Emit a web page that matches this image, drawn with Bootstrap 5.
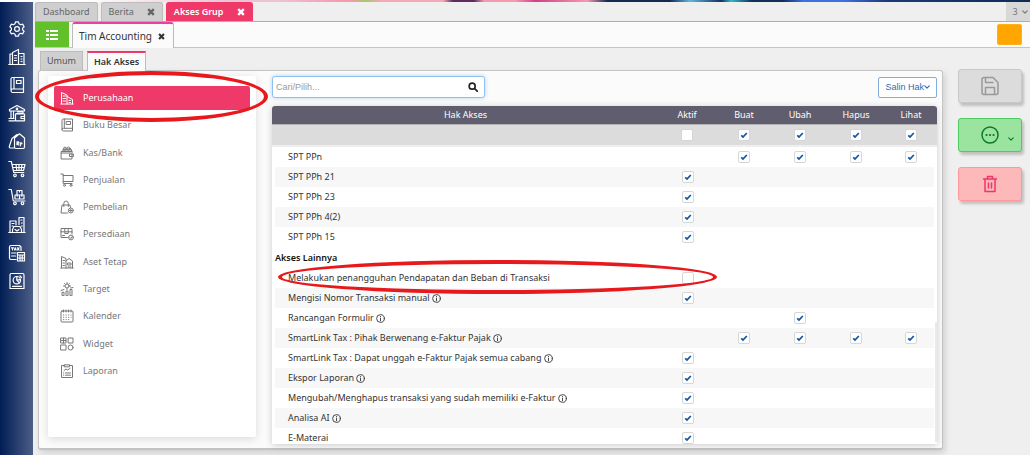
<!DOCTYPE html>
<html lang="id">
<head>
<meta charset="utf-8">
<meta name="viewport" content="width=device-width, initial-scale=1">
<title>Akses Grup</title>
<link rel="stylesheet" href="https://cdn.jsdelivr.net/npm/bootstrap@5.3.0/dist/css/bootstrap.min.css">
<style>
  :root { --pink: #ef3969; --line: #c4c4c4; }
  body { font-family: "Noto Sans", "Open Sans", sans-serif; font-size: 9px; line-height: 14px; background: #efefef; color: #333; }
  a { color: inherit; text-decoration: none; }
  svg { display: block; fill: none; stroke: currentColor; stroke-width: 1.2; stroke-linecap: round; stroke-linejoin: round; }
  .top-strip { height: 2px; background: linear-gradient(90deg, #fff 0 8%, #eec3d3 22% 27%, #f49ab0 33% 34%, #a8c86a 35.500%, #f5a8b8 37% 43%, #5e2b62 44% 46%, #f49ab0 47% 50%, #d0408a 52%, #f49ab0 57%, #132b50 59% 65%, #63b6dd 67%, #17325f 70%, #35b9c4 71%, #12305a 73% 76%, #3f70e0 78% 82%, #1c3b77 86%, #0d2c55); }
  .rail { width: 33px; padding-top: 18px; background: linear-gradient(90deg, #001d54, #4c5e88); color: #fff; }
  .rail a { height: 28px; }
  .rail svg { width: 18px; height: 18px; }
  .workspace { padding-left: 2px; min-width: 0; }
  .fit { min-height: 0; }
  .tabs-main { height: 20px; gap: 3px; border-bottom: 1px solid #ea90ae; }
  .tab-page { height: 19px; padding: 0 7px; gap: 13px; background: #cfcfcf; border: 1px solid #bcbcbc; border-bottom: 0; border-radius: 3px 3px 0 0; color: #666; }
  .tab-page.on { background: var(--pink); border-color: var(--pink); color: #fff; font-weight: 600; }
  .close-x { border: 0; padding: 0; background: none; color: inherit; }
  .close-x svg { width: 8px; height: 8px; stroke-width: 3; stroke-linecap: butt; }
  .tab-count { width: 24px; background: #d8d8d8; color: #777; }
  .chev { width: 6px; height: 6px; stroke-width: 1.5; }
  .tabs-doc { height: 26px; background: #fbfbfb; border-bottom: 1px solid var(--line); }
  .list-btn { width: 34px; height: 25px; border: 0; padding: 0; background: #62c12a; color: #fff; }
  .list-btn svg { width: 12px; height: 12px; stroke-width: 2; stroke-linecap: butt; }
  .tab-doc { height: 26px; margin-left: 3px; padding: 0 8px 0 6px; gap: 6px; background: #fbfbfb; border: 1px solid #bbb; border-top: 2px solid #ee3fa0; border-bottom: 0; border-radius: 3px 3px 0 0; font-size: 10px; }
  .tab-doc svg { width: 7px; height: 7px; }
  .flag-btn { width: 25px; height: 21px; margin-top: 2px; border: 1px solid #ffb01c; border-radius: 2px; padding: 0; background: #ffa600; }
  .content-col { padding: 3px 0 5px 3px; min-width: 0; }
  .tabs-sub { padding-left: 2px; gap: 4px; }
  .tab-sub { height: 19px; padding: 0 6px; background: #cfcfcf; border: 1px solid #bcbcbc; border-bottom: 0; color: #555; }
  .tab-sub.on { position: relative; z-index: 1; margin-bottom: -1px; height: 20px; background: #fbfbfb; border-top: 2px solid var(--pink); color: #333; font-weight: 600; }
  .panel { background: #fbfbfb; border: 1px solid var(--line); border-bottom-width: 2px; border-radius: 3px; box-shadow: 2px 3px 6px #0002; padding: 5px 5px 4px 9px; gap: 16px; min-height: 0; }
  .menu { width: 208px; margin-bottom: 7px; padding: 10px 6px; background: #fff; border-radius: 2px; box-shadow: 0 2px 9px #0002; }
  .menu ul { height: 297px; }
  .menu a { position: relative; height: 24px; padding-left: 6px; gap: 9px; color: #777; }
  .menu svg { width: 14px; height: 14px; stroke-width: 1; }
  .menu a.on { background: var(--pink); color: #fff; border-radius: 2px; }
  .ring { position: absolute; z-index: 5; border: 4px solid #e8191c; border-radius: 50%; pointer-events: none; }
  .ring-menu { left: -19px; right: -18px; top: -15px; bottom: -12px; }
  .ring-row { left: 3px; right: -58px; top: -8px; bottom: -6px; }
  .search { width: 213px; height: 22px; padding-right: 6px; border: 1px solid #8fc1f0; border-radius: 3px; background: #fff; box-shadow: 0 0 4px #8fc1f0aa; }
  .search input { border: 0; outline: 0; padding: 0 3px; background: none; font: 9px "Liberation Sans", sans-serif; color: #333; }
  .search input::placeholder { color: #999; }
  .search button { border: 0; padding: 0; background: none; color: #222; }
  .search button svg { width: 10px; height: 10px; stroke-width: 2; }
  .copy-btn { height: 21px; padding: 0 6px; border: 1px solid #83acd9; border-radius: 2px; background: #fff; color: #2f6cb3; font: 9px "Liberation Sans", sans-serif; }
  .grid-box { position: relative; margin-top: 8px; background: #fff; border-radius: 3px 3px 0 0; box-shadow: 0 1px 7px #0003; min-height: 0; }
  .grid-box::after { content: ""; position: absolute; right: 0; bottom: 2px; width: 2px; height: 120px; background: #e9e9e9; }
  .rights { width: 100%; table-layout: fixed; border-collapse: separate; border-spacing: 0; line-height: 14px; }
  .rights .c { width: 56px; }
  .rights .c-end { width: 54px; }
  .rights th, .rights td { padding: 0; text-align: center; vertical-align: middle; }
  .rights thead th { height: 18px; background: #605e6e; color: #fff; font-weight: 400; }
  .rights thead td { height: 23px; background: #dcdcdc; border-top: 1px solid #b5b5b8; border-bottom: 2px solid #efefef; }
  .rights tbody td, .rights tbody th { height: 20px; }
  .rights tbody th { position: relative; border-left: 3px solid #fff; padding-left: 13px; text-align: left; font-weight: 400; color: #333; }
  .rights tbody td:last-child { border-right: 3px solid #fff; padding-left: 4px; }
  .rights tbody td:not(:last-child), .rights thead :nth-child(n+3) { padding-left: 2px; }
  .rights .alt > * { background: #f7f7f7; background-clip: padding-box; }
  .rights .group-row th { height: 21px; padding-left: 0; font-weight: 600; color: #111; }
  .rights th svg { display: inline-block; width: 9px; height: 9px; stroke-width: 1; vertical-align: -2px; }
  .rights input { appearance: none; display: block; width: 12px; height: 12px; margin: 0 auto; border: 1px solid #d6d6d6; border-radius: 2px; background: #fff center/8px 8px no-repeat; }
  .rights input:checked { background-image: url("data:image/svg+xml,%3Csvg xmlns='http://www.w3.org/2000/svg' viewBox='0 0 8 8'%3E%3Cpath d='M1.2 4.4 3 6 6.8 2' fill='none' stroke='%231558a8' stroke-width='1.8'/%3E%3C/svg%3E"); }
  .actions { width: 87px; padding: 21px 8px 0 15px; gap: 15px; }
  .act { height: 34px; padding: 0; border: 1px solid; border-radius: 3px; box-shadow: 2px 3px 3px #0003; }
  .act .glyph { width: 20px; height: 20px; stroke-width: 1.5; }
  .act-save { background: #dcdcdc; border-color: #c9c9c9; color: #999; }
  .act-more { position: relative; background: #9be49f; border-color: #4ccb60; color: #0b7a2b; }
  .act-more .chev { position: absolute; right: 7px; bottom: 9px; }
  .act-del { background: #fdb9b9; border-color: #f99; color: #f0356a; }
</style>
<script src="https://cdn.jsdelivr.net/npm/bootstrap@5.3.0/dist/js/bootstrap.bundle.min.js"></script>
</head>
<body class="vh-100 d-flex flex-column overflow-hidden">
<svg width="0" height="0" class="position-absolute">
  <symbol id="x" viewBox="0 0 10 10"><path d="M1.500 1.500l7 7M8.500 1.500l-7 7"/></symbol>
  <symbol id="down" viewBox="0 0 8 8"><path d="M1 2.500l3 3 3-3"/></symbol>
  <symbol id="info" viewBox="0 0 10 10"><circle cx="5" cy="5" r="4.300"/><path d="M5 4.500v3M5 2.600v.2"/></symbol>
  <symbol id="lens" viewBox="0 0 12 12"><circle cx="5" cy="5" r="3.600"/><path d="M8 8l3 3"/></symbol>
  <symbol id="gear" viewBox="0 0 18 18"><circle cx="9" cy="9" r="2.400"/><path d="M7.500 1.800h3l.5 2 1.600.9 2-.6 1.500 2.600-1.500 1.400v1.800l1.500 1.400-1.500 2.600-2-.6-1.600.9-.5 2h-3l-.5-2-1.600-.9-2 .6-1.500-2.600 1.500-1.400V8.100L1.900 6.700l1.500-2.600 2 .6L7 3.800z"/></symbol>
  <symbol id="city" viewBox="0 0 18 18"><path d="M.8 16.500h16.400M4.500 16V4.500L10.500 1.500V16M4.500 6H2v10M10.500 5.500h5.500V16M6.500 7.500h2M6.500 10h2M6.500 12.500h2M13 8.500h1M13 11h1M13 13.500h1"/></symbol>
  <symbol id="book" viewBox="0 0 18 18"><path d="M3 14.500V3q0-1.500 1.500-1.500H15.500V16.500H4.500Q3 16.300 3 14.500 3 13 4.500 13H15.500M6 1.500V13M8.500 4.500h4.500v3H8.500z"/></symbol>
  <symbol id="bank" viewBox="0 0 18 18"><path d="M1.500 7V5.500L9 1.500l7.500 4V7zM3 7v7.500M5.500 7v7.500M1 14.500h5M1 16.800h5.500M8 9.500h7v-1.500H9.500M7.500 10h9v6.800h-9zM16.500 12.500H13v2h3.500"/><circle cx="9" cy="4.800" r=".8"/></symbol>
  <symbol id="tags" viewBox="0 0 18 18"><path d="M6.500 6L11.500 1.800 16.500 6V15Q16.500 16.500 15 16.500H8Q6.500 16.500 6.500 15zM6.500 16H2Q1 15.500 1.300 14.500L4 6.500 9 2.500M9 12.800v-3h1.300q1 .8 0 1.500H9l1.500 1.500M12.300 13.800v-3q1.800-.3 1.500 1l-1.500.5"/></symbol>
  <symbol id="cart" viewBox="0 0 18 18"><path d="M.8 1.500h2.500l2.500 11h10M4 4.500h13l-1.500 6H5.400M4.700 7.500h11.500M8 4.500l.8 6M11 4.500v6M14 4.500l-.8 6"/><circle cx="7" cy="15.300" r="1.300"/><circle cx="14.500" cy="15.300" r="1.300"/></symbol>
  <symbol id="trolley" viewBox="0 0 18 18"><path d="M.8 1.500h2.500l2 11.500H17M7 7h4.500v4H7zM11.500 7H16v4h-4.500M9 2.500h5V7M9 2.500V7M11.500 2.500v1.500M9.200 7v1.200M13.800 7v1.200"/><circle cx="7" cy="15.300" r="1.300"/><circle cx="14.500" cy="15.300" r="1.300"/></symbol>
  <symbol id="asset" viewBox="0 0 18 18"><path d="M.8 16.500h16.400M2 16V5h6v4M4 7.500h2M4 10h1M11 8.500V1.500h5V16M13 4h1M13.500 7h.8M13.500 10h.8M4.500 16v-2.500l1.500-3h6l1.500 3V16M7 13.500l2 1.500 2-1.500"/></symbol>
  <symbol id="tax" viewBox="0 0 18 18"><path d="M8 15.500H3Q1.500 15.500 1.500 14V3Q1.500 1.500 3 1.500h8.500L13 3V6.500M3.500 3.800h2M4.500 3.800v2.200M6.500 6l.8-2.200L8.100 6M9.500 3.800l1.500 2.200M11 3.800L9.500 6M3.500 9H8M3.500 12H7.500M9.500 8.500h7v8.500h-7zM9.500 11h7M12 11v6M14.200 11v6M9.500 14h7"/></symbol>
  <symbol id="chart" viewBox="0 0 18 18"><path d="M3.500 1.500h11Q16 1.500 16 3V16.500H2V3Q2 1.500 3.500 1.500zM4.500 14.300h9"/><circle cx="8.800" cy="8.200" r="3.700"/><path d="M8.800 4.500V8.200l3.700-.5M8.800 8.200l2.500 2.600M12 4l1.500 1.500"/></symbol>
  <symbol id="building" viewBox="0 0 14 14"><path d="M.8 13h12.400M1.500 13V1.500L7 4v9M7 5.500l5.500 3V13M3 5h2.500M3 7.500h2.500M3 10h2.500M9 9.500h1.500M9 11.500h1.500"/></symbol>
  <symbol id="ledger" viewBox="0 0 14 14"><path d="M2 11.500V2.500Q2 1 3.500 1H12.500V13H3.500Q2 13 2 11.500 2 10.300 3.500 10.300H12.500M4.300 1v9.300M6.500 3.500h4v3h-4z"/></symbol>
  <symbol id="wallet" viewBox="0 0 14 14"><path d="M1.500 5.500h10.500V13H1.500zM13 8H9.500v2.500H13zM2.500 5.500l1-2.500h7.500l1 2.500"/><circle cx="5" cy="2.600" r="1.500"/><circle cx="8.500" cy="2.500" r="1.500"/><path d="M1.500 7h9M3 4h8"/></symbol>
  <symbol id="cart2" viewBox="0 0 14 14"><path d="M.8 1h2.400v9.500H12M3.200 2.500H13V8.500H3.200"/><circle cx="4.500" cy="12.300" r="1"/><circle cx="11" cy="12.300" r="1"/></symbol>
  <symbol id="bag" viewBox="0 0 14 14"><path d="M7.500 13H1L2 5h8l.5 2.500M3.800 6.500V3.500Q4 1 6 1t2.300 2.500v3M9.500 10.500h2.500M10.800 9.300v2.500"/><circle cx="10.800" cy="10.500" r="2.500"/></symbol>
  <symbol id="box" viewBox="0 0 14 14"><path d="M7.500 10.500H1V1.500H12V7M1 4.800H12M4.800 1.500v5h3.400v-5M2.500 8.500h2M9.800 10.500l1 1 1.500-2"/><circle cx="11" cy="10.500" r="2.400"/></symbol>
  <symbol id="fixed" viewBox="0 0 14 14"><path d="M.8 13h12.400M1.500 13V1.500L6 3.500V13M6 6l3-2.500 3.500 2.500v7M3 5.500h1.500M3 8h1.500M3 10.500h1.500M8 8h3v2H8zM8 12h3"/></symbol>
  <symbol id="target" viewBox="0 0 14 14"><circle cx="7" cy="4" r="2"/><path d="M7 .6v1M7 6.500v1M3.500 4h1M9.500 4h1M4.500 1.500l.7.700M9.500 1.500l-.7.700M2 13.300v-3h2v3zM6 13.300V9h2v4.300zM10 13.300V7.500h2v5.800zM1 8.500l3-1M13 5.500l-2.500.5"/></symbol>
  <symbol id="calendar" viewBox="0 0 14 14"><rect x="1" y="2" width="12" height="11" rx="1"/><path d="M3.500 1v2M6 1v2M8.500 1v2M11 1v2M3.500 6h.3M6 6h.3M8.500 6h.3M11 6h.1M3.500 8.300h.3M6 8.300h.3M8.500 8.300h.3M11 8.300h.1M3.500 10.600h.3M6 10.600h.3M8.500 10.600h.3"/></symbol>
  <symbol id="widget" viewBox="0 0 14 14"><path d="M1 1h5v5H1zM8.500 1h4.500v5H8.500zM1 8h5v5H1zM3.500 1v5M1 3.500h5"/><circle cx="10.600" cy="10.500" r="2.500"/></symbol>
  <symbol id="report" viewBox="0 0 14 14"><path d="M4.500 1.500h-3v12h11v-12h-3M4.500.8h5v2h-5zM4 6.500l2-1.500 1.500 1L10 4.500M3.500 9h.3M5.500 9h5M3.500 11.200h.3M5.500 11.200h5"/></symbol>
</svg>

<div class="top-strip flex-shrink-0"></div>
<div class="fit d-flex flex-grow-1">
  <nav class="rail flex-shrink-0 d-flex flex-column" aria-label="Modul">
    <a href="#" class="d-flex justify-content-center" aria-label="Pengaturan"><svg><use href="#gear"/></svg></a>
    <a href="#" class="d-flex justify-content-center" aria-label="Perusahaan"><svg><use href="#city"/></svg></a>
    <a href="#" class="d-flex justify-content-center" aria-label="Buku Besar"><svg><use href="#book"/></svg></a>
    <a href="#" class="d-flex justify-content-center" aria-label="Kas/Bank"><svg><use href="#bank"/></svg></a>
    <a href="#" class="d-flex justify-content-center" aria-label="Penjualan"><svg><use href="#tags"/></svg></a>
    <a href="#" class="d-flex justify-content-center" aria-label="Pembelian"><svg><use href="#cart"/></svg></a>
    <a href="#" class="d-flex justify-content-center" aria-label="Persediaan"><svg><use href="#trolley"/></svg></a>
    <a href="#" class="d-flex justify-content-center" aria-label="Aset Tetap"><svg><use href="#asset"/></svg></a>
    <a href="#" class="d-flex justify-content-center" aria-label="Pajak"><svg><use href="#tax"/></svg></a>
    <a href="#" class="d-flex justify-content-center" aria-label="Laporan"><svg><use href="#chart"/></svg></a>
  </nav>

  <div class="workspace flex-grow-1 d-flex flex-column">
    <div class="tabs-main flex-shrink-0 d-flex align-items-stretch">
      <a href="#" class="tab-page d-flex align-items-center">Dashboard</a>
      <div class="tab-page d-flex align-items-center"><a href="#">Berita</a><button class="close-x" aria-label="Tutup"><svg><use href="#x"/></svg></button></div>
      <div class="tab-page on d-flex align-items-center"><a href="#">Akses Grup</a><button class="close-x" aria-label="Tutup"><svg><use href="#x"/></svg></button></div>
      <a href="#" class="tab-count ms-auto d-flex align-items-center justify-content-center gap-1 ps-1">3<svg class="chev"><use href="#down"/></svg></a>
    </div>
    <div class="tabs-doc flex-shrink-0 d-flex align-items-start">
      <button class="list-btn d-flex align-items-center justify-content-center" aria-label="Daftar"><svg viewBox="0 0 12 12"><path d="M0 2h3M4 2h8M0 6h3M4 6h8M0 10h3M4 10h8"/></svg></button>
      <div class="tab-doc d-flex align-items-center"><a href="#">Tim Accounting</a><button class="close-x" aria-label="Tutup"><svg><use href="#x"/></svg></button></div>
      <button class="flag-btn ms-auto me-2" aria-label="Tanda"></button>
    </div>

    <div class="fit d-flex flex-grow-1">
      <div class="content-col flex-grow-1 d-flex flex-column">
        <div class="tabs-sub d-flex flex-shrink-0">
          <a href="#" class="tab-sub d-flex align-items-center">Umum</a>
          <a href="#" class="tab-sub on d-flex align-items-center">Hak Akses</a>
        </div>
        <main class="panel flex-grow-1 d-flex">
          <nav class="menu flex-shrink-0" aria-label="Kategori">
            <ul class="list-unstyled m-0 d-flex flex-column justify-content-between">
              <li><a href="#" class="on d-flex align-items-center"><svg><use href="#building"/></svg>Perusahaan<span class="ring ring-menu"></span></a></li>
              <li><a href="#" class="d-flex align-items-center"><svg><use href="#ledger"/></svg>Buku Besar</a></li>
              <li><a href="#" class="d-flex align-items-center"><svg><use href="#wallet"/></svg>Kas/Bank</a></li>
              <li><a href="#" class="d-flex align-items-center"><svg><use href="#cart2"/></svg>Penjualan</a></li>
              <li><a href="#" class="d-flex align-items-center"><svg><use href="#bag"/></svg>Pembelian</a></li>
              <li><a href="#" class="d-flex align-items-center"><svg><use href="#box"/></svg>Persediaan</a></li>
              <li><a href="#" class="d-flex align-items-center"><svg><use href="#fixed"/></svg>Aset Tetap</a></li>
              <li><a href="#" class="d-flex align-items-center"><svg><use href="#target"/></svg>Target</a></li>
              <li><a href="#" class="d-flex align-items-center"><svg><use href="#calendar"/></svg>Kalender</a></li>
              <li><a href="#" class="d-flex align-items-center"><svg><use href="#widget"/></svg>Widget</a></li>
              <li><a href="#" class="d-flex align-items-center"><svg><use href="#report"/></svg>Laporan</a></li>
            </ul>
          </nav>
          <section class="workspace flex-grow-1 d-flex flex-column p-0">
            <div class="d-flex flex-shrink-0 justify-content-between align-items-center">
              <div class="search d-flex align-items-center">
                <input type="text" class="flex-grow-1" placeholder="Cari/Pilih..." aria-label="Cari/Pilih" autofocus>
                <button aria-label="Cari"><svg><use href="#lens"/></svg></button>
              </div>
              <button class="copy-btn d-flex align-items-center">Salin Hak<svg class="chev"><use href="#down"/></svg></button>
            </div>
            <div class="grid-box flex-grow-1 overflow-hidden">
              <table class="rights">
                <colgroup><col><col class="c"><col class="c"><col class="c"><col class="c"><col class="c-end"></colgroup>
                <thead>
                  <tr><th scope="col">Hak Akses</th><th scope="col">Aktif</th><th scope="col">Buat</th><th scope="col">Ubah</th><th scope="col">Hapus</th><th scope="col">Lihat</th></tr>
                  <tr><td></td><td><input type="checkbox" aria-label="Aktif semua"></td><td><input type="checkbox" checked aria-label="Buat semua"></td><td><input type="checkbox" checked aria-label="Ubah semua"></td><td><input type="checkbox" checked aria-label="Hapus semua"></td><td><input type="checkbox" checked aria-label="Lihat semua"></td></tr>
                </thead>
                <tbody id="rows"></tbody>
              </table>
            </div>
          </section>
        </main>
      </div>
      <aside class="actions flex-shrink-0 d-flex flex-column">
        <button class="act act-save d-flex align-items-center justify-content-center" aria-label="Simpan"><svg class="glyph" viewBox="0 0 20 20"><path d="M2 3.500Q2 1.500 4 1.500H13L18 6.500V16.500Q18 18.500 16 18.500H4Q2 18.500 2 16.500zM5.500 1.500V6.500H13M5.500 18.500V11.500H14.500V18.500"/></svg></button>
        <button class="act act-more d-flex align-items-center justify-content-center" aria-label="Lainnya"><svg class="glyph" viewBox="0 0 20 20"><circle cx="10" cy="10" r="8"/><path stroke-width="2.200" d="M6.500 10h.1M10 10h.1M13.500 10h.1"/></svg><svg class="chev"><use href="#down"/></svg></button>
        <button class="act act-del d-flex align-items-center justify-content-center" aria-label="Hapus"><svg class="glyph" viewBox="0 0 20 20"><path d="M3.500 5H16.500M7.500 5V2.500H12.500V5M5 5V17.500H15V5M8.500 9V14M11.500 9V14"/></svg></button>
      </aside>
    </div>
  </div>
</div>
<script>
  // Each row: label, columns that carry a box (lower case = unticked), info icon, shaded
  const columns = ["A", "B", "U", "H", "L"];
  const rows = [
    ["SPT PPn", "BUHL", 0, 0],
    ["SPT PPh 21", "A", 0, 1],
    ["SPT PPh 23", "A", 0, 0],
    ["SPT PPh 4(2)", "A", 0, 1],
    ["SPT PPh 15", "A", 0, 0],
    ["Akses Lainnya"],
    ["Melakukan penangguhan Pendapatan dan Beban di Transaksi", "a", 0, 0],
    ["Mengisi Nomor Transaksi manual", "A", 1, 1],
    ["Rancangan Formulir", "U", 1, 0],
    ["SmartLink Tax : Pihak Berwenang e-Faktur Pajak", "BUHL", 1, 1],
    ["SmartLink Tax : Dapat unggah e-Faktur Pajak semua cabang", "A", 1, 0],
    ["Ekspor Laporan", "A", 1, 1],
    ["Mengubah/Menghapus transaksi yang sudah memiliki e-Faktur", "A", 1, 0],
    ["Analisa AI", "A", 1, 1],
    ["E-Materai", "A", 0, 0]
  ];
  document.getElementById("rows").innerHTML = rows.map(([label, boxes, info, alt]) => {
    if (boxes === undefined) return `<tr class="group-row"><th colspan="6">${label}</th></tr>`;
    const ring = boxes === "a" ? '<span class="ring ring-row"></span>' : "";
    const icon = info ? ' <svg><use href="#info"/></svg>' : "";
    const cells = columns.map(c => {
      const has = boxes.toUpperCase().includes(c);
      return `<td>${has ? `<input type="checkbox" aria-label="${label}" ${boxes.includes(c) ? "checked" : ""}>` : ""}</td>`;
    }).join("");
    return `<tr class="${alt ? "alt" : ""}"><th scope="row">${label}${icon}${ring}</th>${cells}</tr>`;
  }).join("");
</script>
</body>
</html>
